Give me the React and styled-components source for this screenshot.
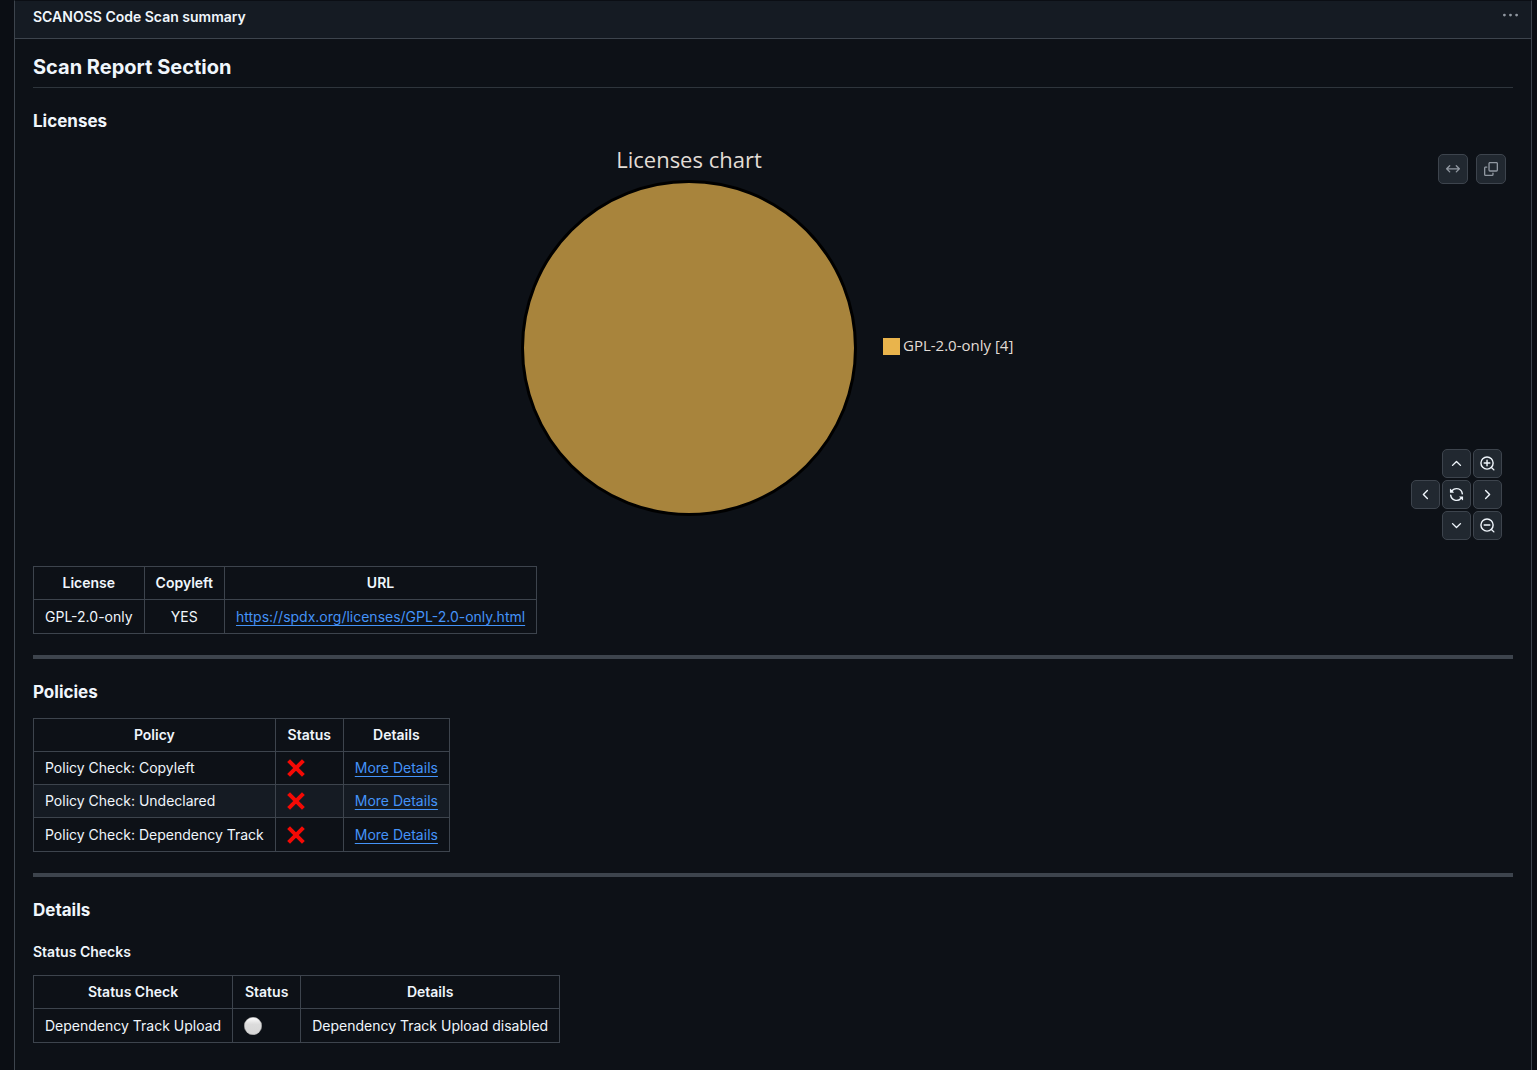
import React from "react"
import styled, { createGlobalStyle, ThemeProvider } from "styled-components"

const theme = {
  bg: "#0d1117",
  page: "#0b0e14",
  muted: "#151b23",
  border: "#3d444d",
  fg: "#f0f6fc",
  grey: "#9198a1",
  link: "#4493f8",
  control: "#212830",
}

const GlobalStyle = createGlobalStyle`
  * {
    box-sizing: border-box;
  }

  body {
    margin: 0;
    background: ${theme.page};
    color: ${theme.fg};
    font-family: Inter, "Liberation Sans", sans-serif;
    font-size: 14px;
    line-height: 20px;
  }
`

const Panel = styled.main`
  min-height: 100vh;
  margin: 0 5px 0 14px;
  border: 1px solid ${({ theme }) => theme.border};
  border-top-color: ${({ theme }) => theme.page};
  border-bottom: 0;
  background: ${({ theme }) => theme.bg};
`

const Header = styled.header`
  display: flex;
  align-items: center;
  justify-content: space-between;
  height: 38px;
  padding: 0 12px 6px 18px;
  border-bottom: 1px solid ${({ theme }) => theme.border};
  background: ${({ theme }) => theme.muted};
  font-weight: 600;
`

const MenuButton = styled.button`
  display: flex;
  padding: 0 1px 2px;
  border: 0;
  background: none;
  color: ${({ theme }) => theme.grey};
`

const Body = styled.div`
  padding: 14px 18px 26px;
`

const Title = styled.h2`
  margin: 0 0 21px;
  padding-bottom: 6px;
  border-bottom: 1px solid ${({ theme }) => theme.border}b3;
  font-size: 20px;
  font-weight: 700;
  line-height: 28px;
`

const Subtitle = styled.h3`
  margin: 0 0 14px;
  font-size: 17px;
  font-weight: 700;
  line-height: 24px;
`

const SmallTitle = styled.h4`
  margin: 20px 0 13px;
  font-size: 14px;
  font-weight: 600;
`

const Divider = styled.hr`
  height: 4px;
  margin: 21px 0;
  border: 0;
  background: ${({ theme }) => theme.border};
`

const ChartBox = styled.div`
  position: relative;
  margin: -3px 0 15px;
`

const Chart = styled.svg`
  display: block;
  width: 504px;
  height: 407px;
  margin: 0 auto;
  fill: #e2ddd6;
  font-family: "Open Sans", "Noto Sans", sans-serif;
  font-weight: 500;
`

const Actions = styled.div`
  position: absolute;
  top: 10px;
  right: 7px;
  display: flex;
  gap: 8px;
`

const Pad = styled.div`
  position: absolute;
  right: 11px;
  bottom: 11px;
  display: grid;
  grid-template-columns: repeat(3, 29px);
  gap: 2px;
`

const IconButton = styled.button`
  display: flex;
  align-items: center;
  justify-content: center;
  width: ${({ $size }) => $size}px;
  height: ${({ $size }) => $size}px;
  padding: 0;
  border: 1px solid ${({ theme }) => theme.border};
  border-radius: 5px;
  background: ${({ theme }) => theme.control};
  color: ${({ $muted, theme }) => ($muted ? theme.grey : theme.fg)};
  grid-column: ${({ $column }) => $column || "auto"};
`

const Table = styled.table`
  border-collapse: collapse;

  th,
  td {
    height: 33px;
    padding: 0 11px;
    border: 1px solid ${({ theme }) => theme.border};
    white-space: nowrap;
  }

  tr:last-child td {
    height: 34px;
  }

  tbody tr:nth-child(2n) {
    background: ${({ theme }) => theme.muted};
  }
`

const HeadCell = styled.th`
  min-width: 68px;
  font-weight: 600;
`

const Cell = styled.td`
  text-align: ${({ $center }) => ($center ? "center" : "left")};

  svg {
    display: block;
  }
`

const Link = styled.a`
  color: ${({ theme }) => theme.link};
  text-decoration: underline;
  text-decoration-thickness: 1px;
  text-decoration-skip-ink: none;
  text-underline-offset: 3px;
`

const Icon = ({ size = 15, children }) => (
  <svg
    width={size}
    height={size}
    viewBox="0 0 16 16"
    fill="currentColor"
    aria-hidden="true"
  >
    {children}
  </svg>
)

const Kebab = () => (
  <Icon>
    <path d="M8 9a1.5 1.5 0 1 0 0-3 1.5 1.5 0 0 0 0 3ZM1.5 9a1.5 1.5 0 1 0 0-3 1.5 1.5 0 0 0 0 3Zm13 0a1.5 1.5 0 1 0 0-3 1.5 1.5 0 0 0 0 3Z" />
  </Icon>
)

const ArrowBoth = () => (
  <Icon size={14}>
    <path d="M3.72 3.72a.75.75 0 0 1 1.06 1.06L2.56 7h10.88l-2.22-2.22a.751.751 0 0 1 .018-1.042.751.751 0 0 1 1.042-.018l3.5 3.5a.75.75 0 0 1 0 1.06l-3.5 3.5a.751.751 0 0 1-1.042-.018.751.751 0 0 1-.018-1.042l2.22-2.22H2.56l2.22 2.22a.751.751 0 0 1-.018 1.042.751.751 0 0 1-1.042.018l-3.5-3.5a.75.75 0 0 1 0-1.06Z" />
  </Icon>
)

const Copy = () => (
  <Icon size={14}>
    <path d="M0 6.75C0 5.784.784 5 1.75 5h1.5a.75.75 0 0 1 0 1.5h-1.5a.25.25 0 0 0-.25.25v7.5c0 .138.112.25.25.25h7.5a.25.25 0 0 0 .25-.25v-1.5a.75.75 0 0 1 1.5 0v1.5A1.75 1.75 0 0 1 9.25 16h-7.5A1.75 1.75 0 0 1 0 14.25Z" />
    <path d="M5 1.75C5 .784 5.784 0 6.75 0h7.5C15.216 0 16 .784 16 1.75v7.5A1.75 1.75 0 0 1 14.25 11h-7.5A1.75 1.75 0 0 1 5 9.25Zm1.75-.25a.25.25 0 0 0-.25.25v7.5c0 .138.112.25.25.25h7.5a.25.25 0 0 0 .25-.25v-7.5a.25.25 0 0 0-.25-.25Z" />
  </Icon>
)

const Chevron = ({ angle = 0 }) => (
  <Icon>
    <path
      transform={`rotate(${angle} 8 8)`}
      d="M3.22 10.53a.749.749 0 0 1 0-1.06l4.25-4.25a.749.749 0 0 1 1.06 0l4.25 4.25a.749.749 0 1 1-1.06 1.06L8 6.811 4.28 10.53a.749.749 0 0 1-1.06 0Z"
    />
  </Icon>
)

const Sync = () => (
  <Icon>
    <path d="M1.705 8.005a.75.75 0 0 1 .834.656 5.5 5.5 0 0 0 9.592 2.97l-1.204-1.204a.25.25 0 0 1 .177-.427h3.646a.25.25 0 0 1 .25.25v3.646a.25.25 0 0 1-.427.177l-1.38-1.38A7.002 7.002 0 0 1 1.05 8.84a.75.75 0 0 1 .656-.834ZM8 2.5a5.487 5.487 0 0 0-4.131 1.869l1.204 1.204A.25.25 0 0 1 4.896 6H1.25A.25.25 0 0 1 1 5.75V2.104a.25.25 0 0 1 .427-.177l1.38 1.38A7.002 7.002 0 0 1 14.95 7.16a.75.75 0 0 1-1.49.178A5.5 5.5 0 0 0 8 2.5Z" />
  </Icon>
)

const Zoom = ({ plus }) => (
  <Icon>
    <path
      d={`M12.2 12.2l2.6 2.6M4.5 7.5h6${plus ? "M7.5 4.5v6" : ""}`}
      stroke="currentColor"
      strokeWidth="1.5"
      strokeLinecap="round"
    />
    <circle
      cx="7.5"
      cy="7.5"
      r="6.5"
      fill="none"
      stroke="currentColor"
      strokeWidth="1.5"
    />
  </Icon>
)

const Cross = () => (
  <svg width="18" height="18" viewBox="0 0 18 18" role="img" aria-label="Failed">
    <path d="M1.6 1.6l14.8 14.8M16.4 1.6L1.6 16.4" stroke="#f40a05" strokeWidth="4" />
  </svg>
)

const Circle = () => (
  <svg width="18" height="18" viewBox="0 0 18 18" role="img" aria-label="Disabled">
    <defs>
      <linearGradient id="shine" x1="0" y1="0" x2="0" y2="1">
        <stop offset="0" stopColor="#fff" />
        <stop offset="0.4" stopColor="#dcdcdc" />
        <stop offset="1" stopColor="#d6d6d6" />
      </linearGradient>
    </defs>
    <circle cx="9" cy="9" r="8.7" fill="url(#shine)" stroke="#aaa" strokeWidth="0.5" />
  </svg>
)

const policies = ["Copyleft", "Undeclared", "Dependency Track"]

const Head = ({ columns }) => (
  <thead>
    <tr>
      {columns.map(column => (
        <HeadCell key={column} scope="col">
          {column}
        </HeadCell>
      ))}
    </tr>
  </thead>
)

const LicensesChart = () => (
  <ChartBox>
    <Chart viewBox="0 0 504 407" role="img" aria-label="Licenses chart">
      <text x="168" y="24" fontSize="22" textAnchor="middle">
        Licenses chart
      </text>
      <circle cx="168" cy="204" r="166.5" fill="#a8843c" stroke="#000" strokeWidth="3" />
      <rect x="362" y="194" width="17" height="17" fill="#e9b44c" />
      <text x="382" y="207" fontSize="15">
        GPL-2.0-only [4]
      </text>
    </Chart>
    <Actions>
      <IconButton $size={30} $muted aria-label="Expand">
        <ArrowBoth />
      </IconButton>
      <IconButton $size={30} $muted aria-label="Copy">
        <Copy />
      </IconButton>
    </Actions>
    <Pad>
      <IconButton $size={29} $column={2} aria-label="Pan up">
        <Chevron />
      </IconButton>
      <IconButton $size={29} $column={3} aria-label="Zoom in">
        <Zoom plus />
      </IconButton>
      <IconButton $size={29} $column={1} aria-label="Pan left">
        <Chevron angle={-90} />
      </IconButton>
      <IconButton $size={29} $column={2} aria-label="Reset view">
        <Sync />
      </IconButton>
      <IconButton $size={29} $column={3} aria-label="Pan right">
        <Chevron angle={90} />
      </IconButton>
      <IconButton $size={29} $column={2} aria-label="Pan down">
        <Chevron angle={180} />
      </IconButton>
      <IconButton $size={29} $column={3} aria-label="Zoom out">
        <Zoom />
      </IconButton>
    </Pad>
  </ChartBox>
)

const App = () => (
  <ThemeProvider theme={theme}>
    <GlobalStyle />
    <Panel>
      <Header>
        <span>SCANOSS Code Scan summary</span>
        <MenuButton aria-label="Summary options">
          <Kebab />
        </MenuButton>
      </Header>
      <Body>
        <Title>Scan Report Section</Title>
        <Subtitle>Licenses</Subtitle>
        <LicensesChart />
        <Table>
          <Head columns={["License", "Copyleft", "URL"]} />
          <tbody>
            <tr>
              <Cell>GPL-2.0-only</Cell>
              <Cell $center>YES</Cell>
              <Cell>
                <Link href="https://spdx.org/licenses/GPL-2.0-only.html">
                  https://spdx.org/licenses/GPL-2.0-only.html
                </Link>
              </Cell>
            </tr>
          </tbody>
        </Table>
        <Divider />
        <Subtitle>Policies</Subtitle>
        <Table>
          <Head columns={["Policy", "Status", "Details"]} />
          <tbody>
            {policies.map(policy => (
              <tr key={policy}>
                <Cell>Policy Check: {policy}</Cell>
                <Cell>
                  <Cross />
                </Cell>
                <Cell>
                  <Link href="#details">More Details</Link>
                </Cell>
              </tr>
            ))}
          </tbody>
        </Table>
        <Divider />
        <Subtitle id="details">Details</Subtitle>
        <SmallTitle>Status Checks</SmallTitle>
        <Table>
          <Head columns={["Status Check", "Status", "Details"]} />
          <tbody>
            <tr>
              <Cell>Dependency Track Upload</Cell>
              <Cell>
                <Circle />
              </Cell>
              <Cell>Dependency Track Upload disabled</Cell>
            </tr>
          </tbody>
        </Table>
      </Body>
    </Panel>
  </ThemeProvider>
)

export default App
